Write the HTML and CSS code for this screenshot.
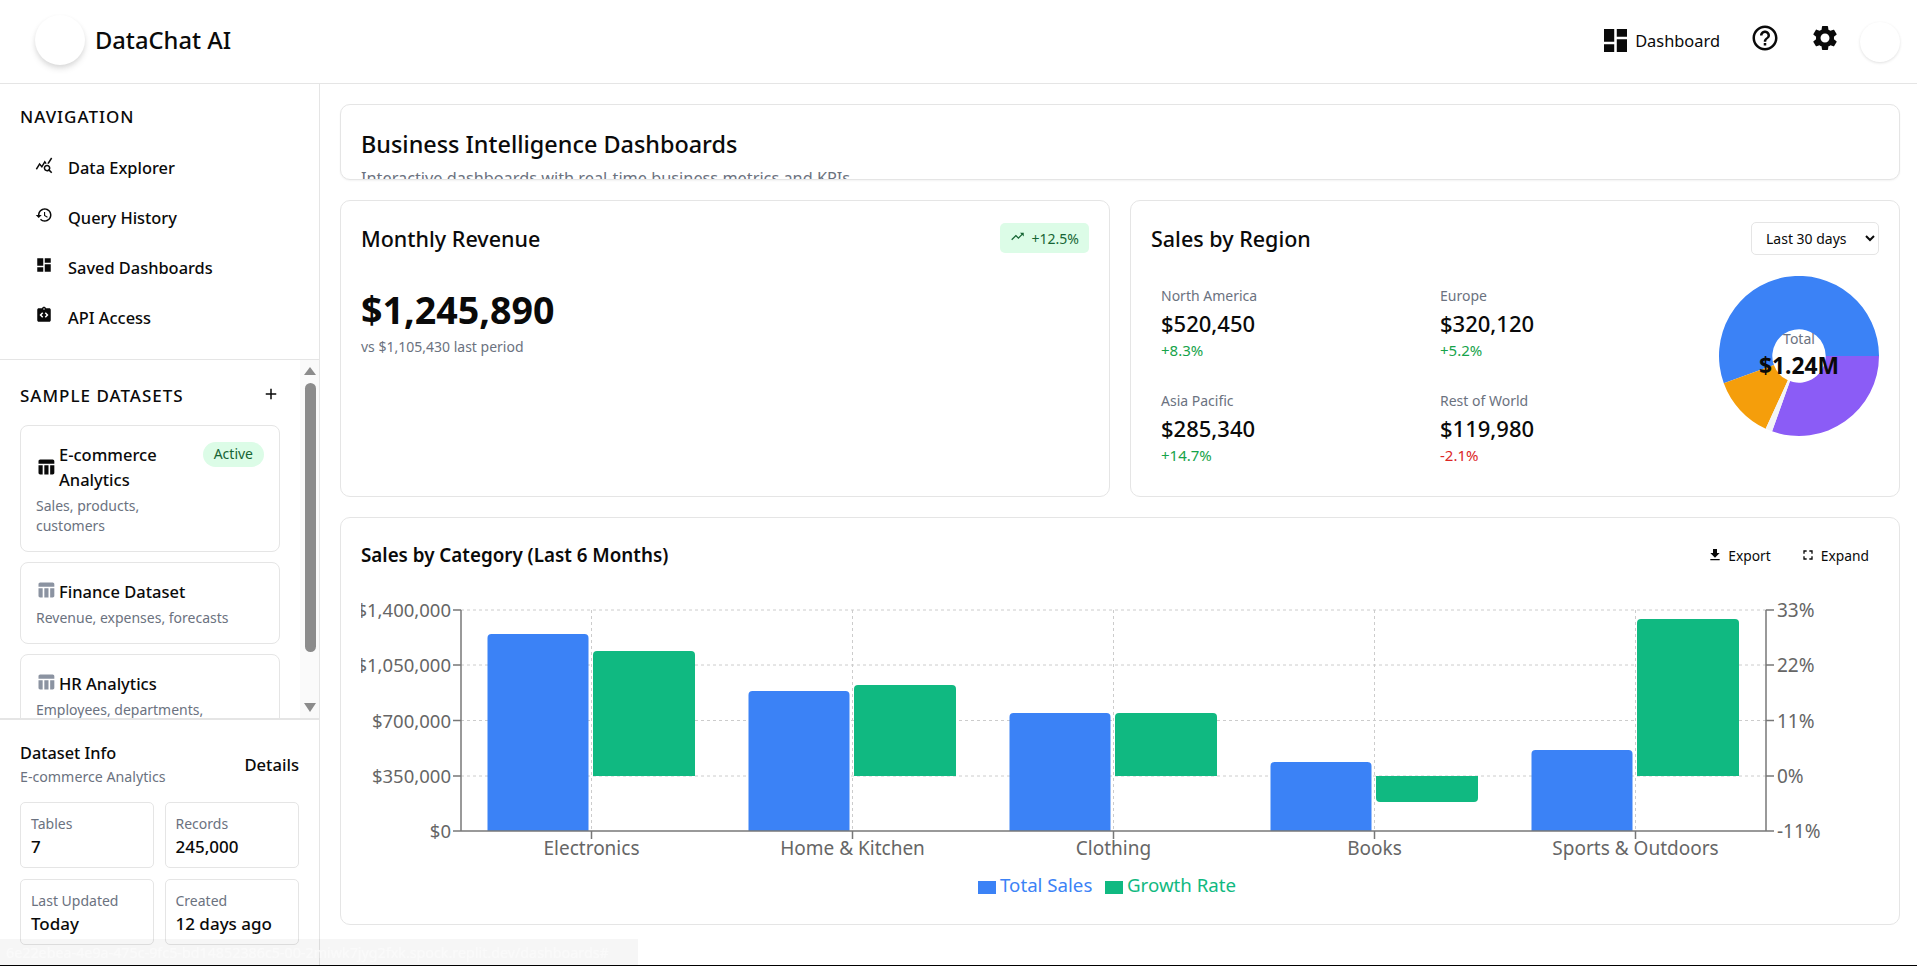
FILE: index.html
```html
<!DOCTYPE html>
<html lang="en">
<head>
    <meta charset="UTF-8">
    <title>DataChat AI</title>
    <link rel="stylesheet" href="styles.css">
</head>
<body>

<header class="topbar">
    <div class="brand">
        <div class="brand-logo"></div>
        <span class="brand-name">DataChat AI</span>
    </div>
    <div class="top-actions">
        <a class="top-link" href="#">
            <svg class="top-link-icon" viewBox="3 3 18 18"><path d="M3 13h8V3H3v10zm0 8h8v-6H3v6zm10 0h8V11h-8v10zm0-18v6h8V3h-8z"/></svg>
            Dashboard
        </a>
        <svg class="top-icon" viewBox="0 0 24 24"><path d="M11 18h2v-2h-2v2zm1-16C6.48 2 2 6.48 2 12s4.48 10 10 10 10-4.48 10-10S17.52 2 12 2zm0 18c-4.41 0-8-3.59-8-8s3.59-8 8-8 8 3.59 8 8-3.59 8-8 8zm0-14c-2.21 0-4 1.79-4 4h2c0-1.1.9-2 2-2s2 .9 2 2c0 2-3 1.75-3 5h2c0-2.25 3-2.5 3-5 0-2.21-1.79-4-4-4z"/></svg>
        <svg class="top-icon" viewBox="0 0 24 24"><path d="M19.14 12.94c.04-.3.06-.61.06-.94 0-.32-.02-.64-.07-.94l2.03-1.58c.18-.14.23-.41.12-.61l-1.92-3.32c-.12-.22-.37-.29-.59-.22l-2.39.96c-.5-.38-1.03-.7-1.62-.94l-.36-2.54c-.04-.24-.24-.41-.48-.41h-3.84c-.24 0-.43.17-.47.41l-.36 2.54c-.59.24-1.13.57-1.62.94l-2.39-.96c-.22-.08-.47 0-.59.22L2.74 8.87c-.12.21-.08.47.12.61l2.03 1.58c-.05.3-.09.63-.09.94s.02.64.07.94l-2.03 1.58c-.18.14-.23.41-.12.61l1.92 3.32c.12.22.37.29.59.22l2.39-.96c.5.38 1.03.7 1.62.94l.36 2.54c.05.24.24.41.48.41h3.84c.24 0 .44-.17.47-.41l.36-2.54c.59-.24 1.13-.56 1.62-.94l2.39.96c.22.08.47 0 .59-.22l1.92-3.32c.12-.22.07-.47-.12-.61l-2.01-1.58zM12 15.6c-1.98 0-3.6-1.62-3.6-3.6s1.62-3.6 3.6-3.6 3.6 1.62 3.6 3.6-1.62 3.6-3.6 3.6z"/></svg>
        <div class="avatar"></div>
    </div>
</header>

<div class="layout">

    <aside class="sidebar">
        <nav class="nav-section">
            <h3 class="section-title">NAVIGATION</h3>
            <a class="nav-item" href="#">
                <svg class="nav-icon" viewBox="0 0 24 24"><path d="M19.88 18.47c.44-.7.7-1.51.7-2.39 0-2.49-2.01-4.5-4.5-4.5s-4.5 2.01-4.5 4.5 2.01 4.5 4.49 4.5c.88 0 1.7-.26 2.39-.7L21.58 23 23 21.58l-3.12-3.11zm-3.8.11c-1.38 0-2.5-1.12-2.5-2.5s1.12-2.5 2.5-2.5 2.5 1.12 2.5 2.5-1.12 2.5-2.5 2.5zm-.36-8.5c-.74.02-1.45.18-2.1.45l-.55-.83-3.8 6.18-3.01-3.52-3.63 5.81L1 17l5-8 3 3.5L13 6l2.72 4.08zm2.59.5c-.64-.28-1.33-.45-2.05-.49L21.38 2 23 3.18l-4.69 7.4z"/></svg>
                Data Explorer
            </a>
            <a class="nav-item" href="#">
                <svg class="nav-icon" viewBox="0 0 24 24"><path d="M13 3c-4.97 0-9 4.03-9 9H1l3.89 3.89.07.14L9 12H6c0-3.87 3.13-7 7-7s7 3.13 7 7-3.13 7-7 7c-1.93 0-3.68-.79-4.94-2.06l-1.42 1.42C8.27 19.99 10.51 21 13 21c4.97 0 9-4.03 9-9s-4.03-9-9-9zm-1 5v5l4.28 2.54.72-1.21-3.5-2.08V8H12z"/></svg>
                Query History
            </a>
            <a class="nav-item" href="#">
                <svg class="nav-icon" viewBox="0 0 24 24"><path d="M3 13h8V3H3v10zm0 8h8v-6H3v6zm10 0h8V11h-8v10zm0-18v6h8V3h-8z"/></svg>
                Saved Dashboards
            </a>
            <a class="nav-item" href="#">
                <svg class="nav-icon" viewBox="0 0 24 24"><path fill-rule="evenodd" d="M19 3h-4.18C14.4 1.84 13.3 1 12 1s-2.4.84-2.82 2H5c-1.1 0-2 .9-2 2v14c0 1.1.9 2 2 2h14c1.1 0 2-.9 2-2V5c0-1.1-.9-2-2-2zm-7 0c.55 0 1 .45 1 1s-.45 1-1 1-1-.45-1-1 .45-1 1-1zM11 14.17l-1.41 1.41L6 12l3.59-3.59L11 9.83 8.83 12 11 14.17zm3.41 1.41L13 14.17 15.17 12 13 9.83l1.41-1.41L18 12l-3.59 3.58z"/></svg>
                API Access
            </a>
        </nav>

        <section class="datasets">
            <div class="datasets-list">
                <div class="datasets-head">
                    <h3 class="section-title">SAMPLE DATASETS</h3>
                    <svg class="add-icon" viewBox="0 0 24 24"><path d="M19 13h-6v6h-2v-6H5v-2h6V5h2v6h6v2z"/></svg>
                </div>

                <div class="dataset-card">
                    <div class="dataset-top">
                        <div class="dataset-title">
                            <svg class="dataset-icon active-icon" viewBox="0 0 24 24"><path d="M10 10.02h5V21h-5zM17 21h3c1.1 0 2-.9 2-2v-9h-5v11zm3-18H5c-1.1 0-2 .9-2 2v3h19V5c0-1.1-.9-2-2-2zM3 19c0 1.1.9 2 2 2h3V10H3v9z"/></svg>
                            <span>E-commerce Analytics</span>
                        </div>
                        <span class="active-badge">Active</span>
                    </div>
                    <p class="dataset-desc narrow">Sales, products, customers</p>
                </div>

                <div class="dataset-card">
                    <div class="dataset-title">
                        <svg class="dataset-icon" viewBox="0 0 24 24"><path d="M10 10.02h5V21h-5zM17 21h3c1.1 0 2-.9 2-2v-9h-5v11zm3-18H5c-1.1 0-2 .9-2 2v3h19V5c0-1.1-.9-2-2-2zM3 19c0 1.1.9 2 2 2h3V10H3v9z"/></svg>
                        <span>Finance Dataset</span>
                    </div>
                    <p class="dataset-desc">Revenue, expenses, forecasts</p>
                </div>

                <div class="dataset-card">
                    <div class="dataset-title">
                        <svg class="dataset-icon" viewBox="0 0 24 24"><path d="M10 10.02h5V21h-5zM17 21h3c1.1 0 2-.9 2-2v-9h-5v11zm3-18H5c-1.1 0-2 .9-2 2v3h19V5c0-1.1-.9-2-2-2zM3 19c0 1.1.9 2 2 2h3V10H3v9z"/></svg>
                        <span>HR Analytics</span>
                    </div>
                    <p class="dataset-desc wrap">Employees, departments, salaries</p>
                </div>
            </div>

            <div class="scrollbar">
                <span class="scroll-up"></span>
                <span class="scroll-thumb"></span>
                <span class="scroll-down"></span>
            </div>
        </section>

        <section class="dataset-info">
            <div class="info-head">
                <div>
                    <h4>Dataset Info</h4>
                    <p>E-commerce Analytics</p>
                </div>
                <a class="details-link" href="#">Details</a>
            </div>
            <div class="info-grid">
                <div class="info-box"><span>Tables</span><strong>7</strong></div>
                <div class="info-box"><span>Records</span><strong>245,000</strong></div>
                <div class="info-box"><span>Last Updated</span><strong>Today</strong></div>
                <div class="info-box"><span>Created</span><strong>12 days ago</strong></div>
            </div>
        </section>
    </aside>

    <main class="content">

        <section class="card page-title">
            <h1>Business Intelligence Dashboards</h1>
            <p>Interactive dashboards with real-time business metrics and KPIs</p>
        </section>

        <div class="card-row">
            <section class="card revenue">
                <div class="card-head">
                    <h2>Monthly Revenue</h2>
                    <span class="trend-badge">
                        <svg class="trend-icon" viewBox="0 0 24 24"><path d="M16 6l2.29 2.29-4.88 4.88-4-4L2 16.59 3.41 18l6-6 4 4 6.3-6.29L22 12V6z"/></svg>
                        +12.5%
                    </span>
                </div>
                <div class="revenue-value">$1,245,890</div>
                <div class="revenue-sub">vs $1,105,430 last period</div>
            </section>

            <section class="card regions">
                <div class="card-head">
                    <h2>Sales by Region</h2>
                    <select class="range-select">
                        <option>Last 30 days</option>
                        <option>Last 90 days</option>
                    </select>
                </div>
                <div class="regions-body">
                    <div class="region-grid">
                        <div class="region">
                            <span class="region-name">North America</span>
                            <span class="region-value">$520,450</span>
                            <span class="region-delta up">+8.3%</span>
                        </div>
                        <div class="region">
                            <span class="region-name">Europe</span>
                            <span class="region-value">$320,120</span>
                            <span class="region-delta up">+5.2%</span>
                        </div>
                        <div class="region">
                            <span class="region-name">Asia Pacific</span>
                            <span class="region-value">$285,340</span>
                            <span class="region-delta up">+14.7%</span>
                        </div>
                        <div class="region">
                            <span class="region-name">Rest of World</span>
                            <span class="region-value">$119,980</span>
                            <span class="region-delta down">-2.1%</span>
                        </div>
                    </div>
                    <div class="pie">
                        <svg class="pie-svg" viewBox="-80 -80 160 160">
                            <path class="slice-blue" d="M80 0A80 80 0 1 0 -75.2 27.2L-25.1 9.1A26.7 26.7 0 1 1 26.7 0Z"/>
                            <path class="slice-purple" d="M80 0A80 80 0 0 1 -26.9 75.3L-9 25.1A26.7 26.7 0 0 0 26.7 0Z"/>
                            <path class="slice-orange" d="M-75.2 27.2A80 80 0 0 0 -33.3 72.7L-11.1 24.3A26.7 26.7 0 0 1 -25.1 9.1Z"/>
                            <path class="slice-gray" d="M-33.3 72.7A80 80 0 0 0 -26.9 75.3L-9 25.1A26.7 26.7 0 0 0 -11.1 24.3Z"/>
                        </svg>
                        <div class="pie-label">
                            <span>Total</span>
                            <strong>$1.24M</strong>
                        </div>
                    </div>
                </div>
            </section>
        </div>

        <section class="card category">
            <div class="card-head">
                <h2 class="category-title">Sales by Category (Last 6 Months)</h2>
                <div class="chart-actions">
                    <a href="#">
                        <svg viewBox="0 0 24 24"><path d="M19 9h-4V3H9v6H5l7 7 7-7zM5 18v2h14v-2H5z"/></svg>
                        Export
                    </a>
                    <a href="#">
                        <svg viewBox="0 0 24 24"><path d="M7 14H5v5h5v-2H7v-3zm-2-4h2V7h3V5H5v5zm12 7h-3v2h5v-5h-2v3zM14 5v2h3v3h2V5h-5z"/></svg>
                        Expand
                    </a>
                </div>
            </div>

            <svg class="bar-chart" width="1518" height="310" viewBox="0 0 1518 310">
                <g class="grid">
                    <line x1="100" y1="10" x2="1405" y2="10"/>
                    <line x1="100" y1="65" x2="1405" y2="65"/>
                    <line x1="100" y1="120.5" x2="1405" y2="120.5"/>
                    <line x1="100" y1="176" x2="1405" y2="176"/>
                    <line x1="230.5" y1="10" x2="230.5" y2="231"/>
                    <line x1="491.5" y1="10" x2="491.5" y2="231"/>
                    <line x1="752.5" y1="10" x2="752.5" y2="231"/>
                    <line x1="1013.5" y1="10" x2="1013.5" y2="231"/>
                    <line x1="1274.5" y1="10" x2="1274.5" y2="231"/>
                </g>
                <g class="bars-blue">
                    <path d="M126.5 231V38Q126.5 34 130.5 34H223.5Q227.5 34 227.5 38V231Z"/>
                    <path d="M387.5 231V95Q387.5 91 391.5 91H484.5Q488.5 91 488.5 95V231Z"/>
                    <path d="M648.5 231V117Q648.5 113 652.5 113H745.5Q749.5 113 749.5 117V231Z"/>
                    <path d="M909.5 231V166Q909.5 162 913.5 162H1006.5Q1010.5 162 1010.5 166V231Z"/>
                    <path d="M1170.5 231V154Q1170.5 150 1174.5 150H1267.5Q1271.5 150 1271.5 154V231Z"/>
                </g>
                <g class="bars-green">
                    <path d="M232 176V55Q232 51 236 51H330Q334 51 334 55V176Z"/>
                    <path d="M493 176V89Q493 85 497 85H591Q595 85 595 89V176Z"/>
                    <path d="M754 176V117Q754 113 758 113H852Q856 113 856 117V176Z"/>
                    <path d="M1015 176V198Q1015 202 1019 202H1113Q1117 202 1117 198V176Z"/>
                    <path d="M1276 176V23Q1276 19 1280 19H1374Q1378 19 1378 23V176Z"/>
                </g>
                <g class="axis">
                    <line x1="100" y1="10" x2="100" y2="231"/>
                    <line x1="1405" y1="10" x2="1405" y2="231"/>
                    <line x1="100" y1="231" x2="1405" y2="231"/>
                    <line x1="92" y1="10" x2="100" y2="10"/>
                    <line x1="92" y1="65" x2="100" y2="65"/>
                    <line x1="92" y1="120.5" x2="100" y2="120.5"/>
                    <line x1="92" y1="176" x2="100" y2="176"/>
                    <line x1="92" y1="231" x2="100" y2="231"/>
                    <line x1="1405" y1="10" x2="1413" y2="10"/>
                    <line x1="1405" y1="65" x2="1413" y2="65"/>
                    <line x1="1405" y1="120.5" x2="1413" y2="120.5"/>
                    <line x1="1405" y1="176" x2="1413" y2="176"/>
                    <line x1="1405" y1="231" x2="1413" y2="231"/>
                    <line x1="230.5" y1="231" x2="230.5" y2="239"/>
                    <line x1="491.5" y1="231" x2="491.5" y2="239"/>
                    <line x1="752.5" y1="231" x2="752.5" y2="239"/>
                    <line x1="1013.5" y1="231" x2="1013.5" y2="239"/>
                    <line x1="1274.5" y1="231" x2="1274.5" y2="239"/>
                </g>
                <g class="tick-left">
                    <text x="90" y="17">$1,400,000</text>
                    <text x="90" y="72">$1,050,000</text>
                    <text x="90" y="128">$700,000</text>
                    <text x="90" y="183">$350,000</text>
                    <text x="90" y="238">$0</text>
                </g>
                <g class="tick-right">
                    <text x="1416" y="17">33%</text>
                    <text x="1416" y="72">22%</text>
                    <text x="1416" y="128">11%</text>
                    <text x="1416" y="183">0%</text>
                    <text x="1416" y="238">-11%</text>
                </g>
                <g class="tick-bottom">
                    <text x="230.5" y="255">Electronics</text>
                    <text x="491.5" y="255">Home &amp; Kitchen</text>
                    <text x="752.5" y="255">Clothing</text>
                    <text x="1013.5" y="255">Books</text>
                    <text x="1274.5" y="255">Sports &amp; Outdoors</text>
                </g>
                <g class="legend">
                    <rect class="legend-blue" x="617" y="281" width="18" height="13"/>
                    <text class="legend-blue" x="639" y="292">Total Sales</text>
                    <rect class="legend-green" x="744" y="281" width="18" height="13"/>
                    <text class="legend-green" x="766" y="292">Growth Rate</text>
                </g>
            </svg>
        </section>

    </main>
</div>

<div class="status-url">6e22ebea-4e9a-475c-9fc5-bd14852386c5-00-2miwk7jyg2fxk.spock.replit.dev/dashboards#</div>
<div class="window-edge"></div>

</body>
</html>
```

FILE: styles.css
```css
* {
    box-sizing: border-box;
    font-family: "Noto Sans", "Open Sans", sans-serif;
}

html,
body {
    height: 100%;
}

body {
    margin: 0;
    background: white;
    color: #0a0a0a;
    overflow: hidden;
}

a {
    color: inherit;
    text-decoration: none;
}

h1, h2, h3, h4, p {
    margin: 0;
}

svg {
    fill: currentColor;
    flex-shrink: 0;
}

/* top bar */

.topbar {
    height: 84px;
    display: flex;
    align-items: center;
    justify-content: space-between;
    padding: 0 17px 0 35px;
    border-bottom: 1px solid #e5e5e5;
}

.brand {
    display: flex;
    align-items: center;
    gap: 10px;
}

.brand-logo {
    width: 50px;
    height: 50px;
    margin-bottom: 3px;
    border-radius: 50%;
    background: white;
    box-shadow: 0 4px 6px rgba(0, 0, 0, 0.1), 0 2px 4px rgba(0, 0, 0, 0.06);
}

.brand-name {
    font-size: 23.7px;
    font-weight: 500;
    margin-bottom: 4px;
}

.top-actions {
    display: flex;
    align-items: center;
}

.top-link {
    display: flex;
    align-items: center;
    gap: 8px;
    font-size: 16.4px;
    margin-right: 30px;
    margin-bottom: 2px;
}

.top-link-icon {
    width: 23px;
    height: 23px;
}

.top-icon {
    width: 30px;
    height: 30px;
    margin-bottom: 8px;
    margin-right: 30px;
}

.top-icon + .top-icon {
    margin-right: 20px;
}

.avatar {
    width: 40px;
    height: 40px;
    border-radius: 50%;
    background: white;
    box-shadow: 0 1px 3px rgba(0, 0, 0, 0.12);
}

/* sidebar */

.layout {
    display: flex;
    height: 882px;
}

.sidebar {
    width: 320px;
    flex-shrink: 0;
    display: flex;
    flex-direction: column;
    border-right: 1px solid #e5e5e5;
}

.section-title {
    font-size: 17px;
    font-weight: 500;
    line-height: 24px;
    letter-spacing: 1px;
}

.nav-section {
    height: 276px;
    flex-shrink: 0;
    padding: 21px 20px 0;
    border-bottom: 1px solid #e5e5e5;
}

.nav-section .section-title {
    margin-bottom: 13px;
}

.nav-item {
    height: 50px;
    display: flex;
    align-items: center;
    gap: 15px;
    padding-left: 15px;
    font-size: 16.4px;
    font-weight: 500;
}

.nav-icon {
    width: 18px;
    height: 18px;
    margin-bottom: 5px;
}

.datasets {
    height: 360px;
    flex-shrink: 0;
    display: flex;
    overflow: hidden;
    border-bottom: 2px solid #e5e5e5;
}

.datasets-list {
    flex: 1;
    padding: 24px 20px 0;
}

.datasets-head {
    display: flex;
    align-items: center;
    justify-content: space-between;
    margin-bottom: 17px;
}

.add-icon {
    width: 18px;
    height: 18px;
    margin-bottom: 4px;
}

.dataset-card {
    border: 1px solid #e5e5e5;
    border-radius: 8px;
    padding: 16px 15px 15px;
    margin-bottom: 10px;
}

.dataset-top {
    display: flex;
    justify-content: space-between;
    align-items: flex-start;
}

.dataset-title {
    display: flex;
    align-items: center;
    gap: 3px;
    font-size: 16.5px;
    font-weight: 500;
    line-height: 25px;
}

.dataset-top .dataset-title {
    width: 150px;
}

.dataset-icon {
    width: 20px;
    height: 20px;
    margin-bottom: 4px;
    color: #8b93a1;
}

.dataset-icon.active-icon {
    color: #0a0a0a;
    margin-bottom: 0;
}

.active-badge {
    padding: 0 11px;
    height: 25px;
    line-height: 24px;
    border-radius: 13px;
    background: #dcfce7;
    color: #166534;
    font-size: 14px;
}

.dataset-desc {
    margin-top: 4px;
    font-size: 14px;
    line-height: 20px;
    color: #6b7280;
}

.dataset-desc.narrow {
    width: 120px;
}

.dataset-desc.wrap {
    width: 190px;
}

.scrollbar {
    width: 19px;
    flex-shrink: 0;
    display: flex;
    flex-direction: column;
    align-items: center;
    background: #fafafa;
    padding: 7px 0 0 1px;
}

.scroll-up,
.scroll-down {
    width: 0;
    height: 0;
    border-left: 6.5px solid transparent;
    border-right: 6.5px solid transparent;
}

.scroll-up {
    border-bottom: 8px solid #8c8c8c;
}

.scroll-down {
    margin-top: 51px;
    border-top: 9px solid #8c8c8c;
}

.scroll-thumb {
    width: 11px;
    height: 269px;
    margin-top: 8px;
    border-radius: 6px;
    background: #8c8c8c;
}

.dataset-info {
    flex: 1;
    padding: 21px 20px 0;
    overflow: hidden;
}

.info-head {
    display: flex;
    align-items: center;
    justify-content: space-between;
    margin-bottom: 13px;
}

.info-head h4 {
    font-size: 16.3px;
    font-weight: 500;
    line-height: 24px;
}

.info-head p {
    font-size: 14.2px;
    line-height: 24px;
    color: #6b7280;
}

.details-link {
    font-size: 16.6px;
    font-weight: 500;
    margin-bottom: 2px;
}

.info-grid {
    display: grid;
    grid-template-columns: 134px 134px;
    gap: 11px 10.5px;
}

.info-box {
    height: 66px;
    border: 1px solid #e5e5e5;
    border-radius: 5px;
    padding: 11px 10px 0;
}

.info-box span {
    display: block;
    font-size: 14px;
    line-height: 20px;
    color: #6b7280;
}

.info-box strong {
    display: block;
    margin-top: 1px;
    font-size: 17px;
    font-weight: 500;
    line-height: 24px;
}

/* main content */

.content {
    flex: 1;
    display: flex;
    flex-direction: column;
    gap: 20px;
    padding: 20px 17px 0 20px;
}

.card {
    border: 1px solid #e5e5e5;
    border-radius: 10px;
    background: white;
    flex-shrink: 0;
}

.page-title {
    height: 76px;
    overflow: hidden;
    padding: 23px 20px 0;
    box-shadow: 0 1px 2px rgba(0, 0, 0, 0.05);
}

.page-title h1 {
    font-size: 23.4px;
    font-weight: 500;
    line-height: 32px;
}

.page-title p {
    margin-top: 6px;
    font-size: 16.3px;
    line-height: 24px;
    color: #6b7280;
}

.card-row {
    display: grid;
    grid-template-columns: 1fr 1fr;
    gap: 20px;
    height: 297px;
}

.revenue,
.regions {
    padding: 20px;
}

.card-head {
    display: flex;
    align-items: center;
    justify-content: space-between;
}

.card-head h2 {
    font-size: 21.5px;
    font-weight: 500;
}

.revenue .card-head,
.regions .card-head {
    height: 34px;
}

.trend-badge {
    display: flex;
    align-items: center;
    gap: 7px;
    height: 30px;
    padding: 0 10px;
    border-radius: 5px;
    background: #dcfce7;
    color: #166534;
    font-size: 14px;
}

.trend-icon {
    width: 15px;
    height: 15px;
    margin-bottom: 3px;
}

.revenue-value {
    margin-top: 29px;
    font-size: 37.6px;
    font-weight: 700;
    line-height: 52px;
}

.revenue-sub {
    margin-top: 1px;
    font-size: 14px;
    line-height: 20px;
    color: #6b7280;
}

.range-select {
    width: 128px;
    height: 33px;
    padding: 0 8px 0 10px;
    border: 1px solid #e5e5e5;
    border-radius: 5px;
    background: white;
    color: #0a0a0a;
    font-size: 14px;
}

.regions-body {
    display: flex;
    justify-content: space-between;
}

.region-grid {
    display: grid;
    grid-template-columns: 279px 200px;
    row-gap: 31px;
    align-self: flex-start;
    margin-top: 31px;
    padding-left: 10px;
}

.region {
    display: flex;
    flex-direction: column;
}

.region-name {
    font-size: 14px;
    line-height: 20px;
    color: #6b7280;
}

.region-value {
    font-size: 22px;
    font-weight: 500;
    line-height: 34px;
}

.region-delta {
    font-size: 15px;
    line-height: 20px;
}

.up {
    color: #16a34a;
}

.down {
    color: #dc2626;
}

.pie {
    position: relative;
    width: 160px;
    height: 160px;
    margin-top: 21px;
}

.pie-svg {
    width: 160px;
    height: 160px;
    display: block;
}

.slice-blue {
    fill: #3b82f6;
}

.slice-purple {
    fill: #8b5cf6;
}

.slice-orange {
    fill: #f59e0b;
}

.slice-gray {
    fill: #f3f4f6;
}

.pie-label {
    position: absolute;
    left: 0;
    right: 0;
    top: 53px;
    text-align: center;
}

.pie-label span {
    display: block;
    font-size: 14px;
    line-height: 20px;
    color: #6b7280;
}

.pie-label strong {
    display: block;
    font-size: 22.8px;
    font-weight: 700;
    line-height: 34px;
}

.category {
    height: 408px;
    padding: 20px 20px 0;
}

.category .card-head {
    height: 34px;
    margin-bottom: 28px;
}

.card-head .category-title {
    font-size: 18.8px;
    font-weight: 600;
}

.chart-actions {
    display: flex;
    gap: 29px;
    margin-right: 10px;
}

.chart-actions a {
    display: flex;
    align-items: center;
    gap: 5px;
    font-size: 13.8px;
}

.chart-actions svg {
    width: 16px;
    height: 16px;
}

.bar-chart {
    display: block;
}

.grid line {
    stroke: #ccc;
    stroke-dasharray: 3 3;
}

.axis line {
    stroke: #777;
    stroke-width: 1.5;
}

.bars-blue path {
    fill: #3b82f6;
}

.bars-green path {
    fill: #10b981;
}

.bar-chart text {
    font-size: 19px;
    fill: #666;
}

.bar-chart .tick-left text {
    font-size: 18.5px;
    text-anchor: end;
}

.tick-bottom text {
    text-anchor: middle;
}

rect.legend-blue {
    fill: #3b82f6;
}

rect.legend-green {
    fill: #10b981;
}

.bar-chart text.legend-blue {
    font-size: 18.7px;
    fill: #3b82f6;
}

.bar-chart text.legend-green {
    font-size: 18.7px;
    fill: #10b981;
}

/* browser chrome left in the capture */

.status-url {
    position: fixed;
    left: 0;
    bottom: 0;
    width: 638px;
    height: 27px;
    padding: 0 6px;
    line-height: 27px;
    background: rgba(0, 0, 0, 0.035);
    color: #fafafa;
    font-size: 14.3px;
    white-space: nowrap;
    overflow: hidden;
}

.window-edge {
    position: fixed;
    left: 0;
    right: 0;
    bottom: 0;
    height: 1px;
    background: black;
}
```
